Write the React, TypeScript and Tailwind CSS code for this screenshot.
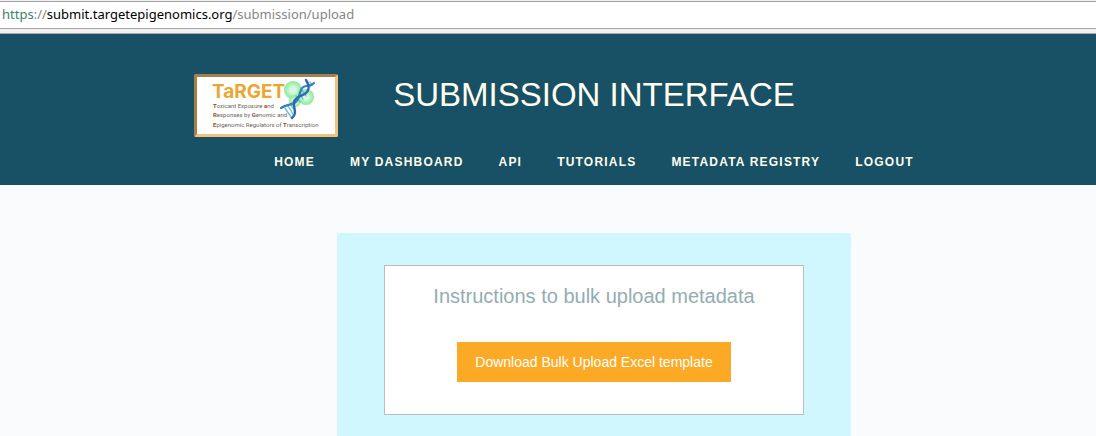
import React from "react";

const navItems = ["HOME", "MY DASHBOARD", "API", "TUTORIALS", "METADATA REGISTRY", "LOGOUT"];

function AddressBar() {
  return (
    <div className="border-b border-[#a9a9a9] bg-[#f1f1f1] pt-px pb-1 font-['Noto_Sans',sans-serif]">
      <div className="flex h-7 items-center border-y border-[#a3a3a3] bg-white pl-0.5 text-[13px] text-[#858585]">
        <p className="whitespace-nowrap">
          <span className="text-[#3b8163]">https</span>://
          <span className="text-black">submit.targetepigenomics.org</span>/submission/upload
        </p>
      </div>
    </div>
  );
}

function Logo() {
  return (
    <a
      href="#"
      aria-label="TaRGET home"
      className="block w-36 rounded-[2px] border-3 border-t-[#a67f4b] border-r-[#f3c27a] border-b-[#f3c27a] border-l-[#a67f4b] bg-white"
    >
      <svg viewBox="0 0 138 57" className="block w-full">
        <defs>
          <radialGradient id="cell">
            <stop offset="0.3" stopColor="#d9f8dd" />
            <stop offset="1" stopColor="#85ea97" />
          </radialGradient>
        </defs>
        <g fill="url(#cell)">
          <circle cx="96" cy="13" r="9" />
          <circle cx="98" cy="24" r="6" />
          <circle cx="109" cy="20" r="8" />
        </g>
        <g fill="none" strokeLinecap="round">
          <path
            d="M110 6l3 4M113 5l2 3M105 13l4 6M102 15l4 7M99 19l4 6M88 31l6 9M91 29l5 8M94 28l4 6"
            stroke="#6cc3d2"
            strokeWidth="1.4"
          />
          <path d="M84 31C91 26 98 29 101 22S103 10 109 9 115 8 117 6" stroke="#3a7fbe" strokeWidth="2.2" />
          <path d="M109 3C111 6 113 11 110 15S98 19 97 25 101 36 95 41" stroke="#2b69b0" strokeWidth="2.4" />
        </g>
        <text x="15" y="21" fill="#eda52f" className="font-['Inter',sans-serif] text-[19px] font-bold">TaRGET</text>
        <g fill="#6d6660" className="font-['Roboto',sans-serif] text-[6px]">
          <text x="16" y="31">
            <tspan className="font-bold" fill="#a34c18">T</tspan>oxicant Exposure <tspan className="font-bold" fill="#a34c18">a</tspan>nd
          </text>
          <text x="16" y="40">
            <tspan className="font-bold" fill="#a34c18">R</tspan>esponses by <tspan className="font-bold" fill="#a34c18">G</tspan>enomic and
          </text>
          <text x="16" y="50">
            <tspan className="font-bold" fill="#a34c18">E</tspan>pigenomic Regulators of <tspan className="font-bold" fill="#a34c18">T</tspan>ranscription
          </text>
        </g>
      </svg>
    </a>
  );
}

export default function App() {
  return (
    <div className="flex min-h-screen flex-col bg-[#fafbfd] font-['Liberation_Sans',Arial,sans-serif]">
      <AddressBar />
      <header className="bg-[#185065] pt-10 pb-[15px] pl-[92px] text-[#fffff0]">
        <div className="grid grid-cols-[1fr_auto_1fr] gap-x-[55px]">
          <div className="flex justify-end">
            <Logo />
          </div>
          <h1 className="text-[33px] leading-[42px] whitespace-nowrap">SUBMISSION INTERFACE</h1>
        </div>
        <nav aria-label="Main" className="mt-[17px]">
          <ul className="flex justify-center gap-[35px] text-xs font-bold tracking-widest whitespace-nowrap">
            {navItems.map((item) => (
              <li key={item}>
                <a href="#">{item}</a>
              </li>
            ))}
          </ul>
        </nav>
      </header>
      <main className="flex grow flex-col pt-12 pl-[92px]">
        <section className="mx-auto w-full max-w-[514px] grow rounded-t-[2px] bg-[#d0f6fe] px-[47px] py-8">
          <div className="flex flex-col items-center border border-[#bdbdbd] bg-white pt-4 pb-8 text-center">
            <h2 className="text-xl leading-7 text-[#92adb3]">Instructions to bulk upload metadata</h2>
            <button type="button" className="mt-8 h-10 bg-[#fcaa26] px-[18px] text-sm text-white">
              Download Bulk Upload Excel template
            </button>
          </div>
        </section>
      </main>
    </div>
  );
}
